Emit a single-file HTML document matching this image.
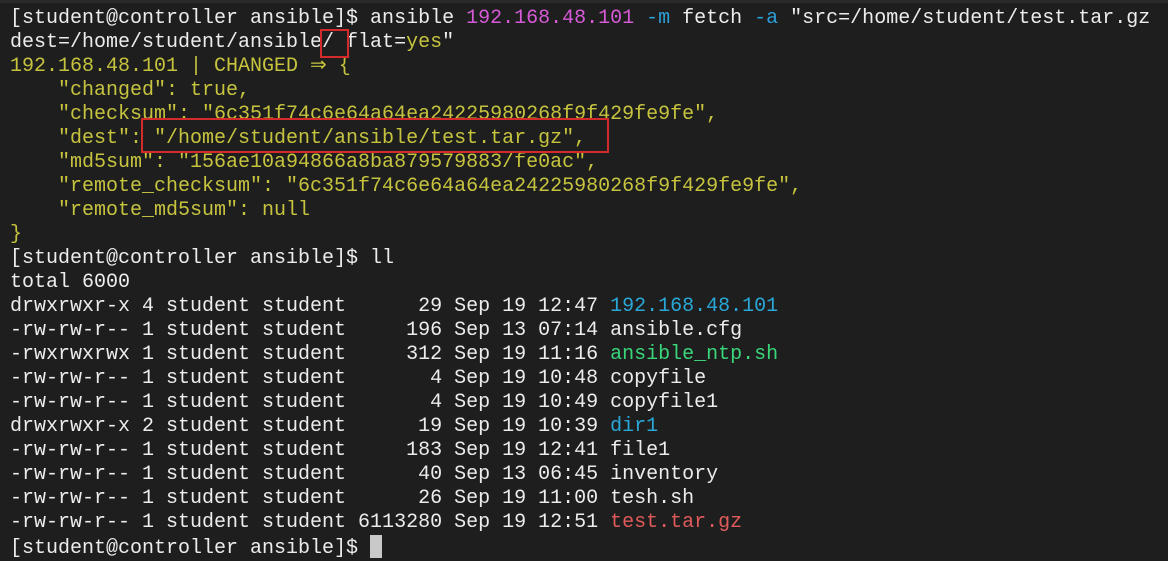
<html><head><style>
body{margin:0;background:#1e1e1e;width:1168px;height:557px;overflow:hidden;position:relative}
pre{margin:0;position:absolute;left:10px;top:6.5px;font:20px/24px "Liberation Mono",monospace;color:#ececec;white-space:pre}
.y{color:#c6c43e}.m{color:#d65ad6}.c{color:#29a8d8}.g{color:#3ad67a}.r{color:#e05a5a}.b{color:#2c9ed8}
.box{position:absolute;border:2px solid #d42a2a}
.cur{display:inline-block;width:12px;height:23px;background:#c8c8c8;vertical-align:-5px}
</style></head><body>
<div style="position:absolute;left:0;top:0;width:1168px;height:3px;background:#2a2a2a"></div>
<pre>[student@controller ansible]$ ansible <span class="m">192.168.48.101</span> <span class="b">-m</span> fetch <span class="b">-a</span> "src=/home/student/test.tar.gz
dest=/home/student/ansible/ flat=<span class="y">yes</span>"
<span class="y">192.168.48.101 | CHANGED ⇒ {
    "changed": true,
    "checksum": "6c351f74c6e64a64ea24225980268f9f429fe9fe",
    "dest": "/home/student/ansible/test.tar.gz",
    "md5sum": "156ae10a94866a8ba879579883/fe0ac",
    "remote_checksum": "6c351f74c6e64a64ea24225980268f9f429fe9fe",
    "remote_md5sum": null
}</span>
[student@controller ansible]$ ll
total 6000
drwxrwxr-x 4 student student      29 Sep 19 12:47 <span class="c">192.168.48.101</span>
-rw-rw-r-- 1 student student     196 Sep 13 07:14 ansible.cfg
-rwxrwxrwx 1 student student     312 Sep 19 11:16 <span class="g">ansible_ntp.sh</span>
-rw-rw-r-- 1 student student       4 Sep 19 10:48 copyfile
-rw-rw-r-- 1 student student       4 Sep 19 10:49 copyfile1
drwxrwxr-x 2 student student      19 Sep 19 10:39 <span class="c">dir1</span>
-rw-rw-r-- 1 student student     183 Sep 19 12:41 file1
-rw-rw-r-- 1 student student      40 Sep 13 06:45 inventory
-rw-rw-r-- 1 student student      26 Sep 19 11:00 tesh.sh
-rw-rw-r-- 1 student student 6113280 Sep 19 12:51 <span class="r">test.tar.gz</span>
[student@controller ansible]$ <span class="cur"></span></pre>
<div class="box" style="left:320px;top:29px;width:25px;height:25px"></div>
<div class="box" style="left:141px;top:118px;width:464px;height:31px"></div>
</body></html>
